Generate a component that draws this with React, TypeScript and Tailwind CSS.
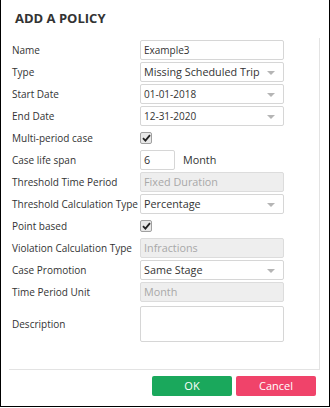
import React from "react";

const font = { fontFamily: '"Open Sans", "Noto Sans", sans-serif' };

function Arrow() {
  return (
    <svg width="8" height="5" viewBox="0 0 8 5" className="absolute right-[8px] top-[8px]">
      <path d="M0 0 L8 0 L4 4 Z" fill="#b5b5b5" />
    </svg>
  );
}

function Check() {
  return (
    <div className="w-[12px] h-[12px] border border-[#a0a0a0] rounded-[2px] bg-[#e8e8e8] flex items-center justify-center">
      <svg width="9" height="8" viewBox="0 0 9 8">
        <path d="M1 4.2 L3.4 6.6 L8 1.2" stroke="#222" strokeWidth="1.8" fill="none" />
      </svg>
    </div>
  );
}

function Row({ label, children }: { label: string; children: React.ReactNode }) {
  return (
    <div className="flex items-center h-[22px]">
      <div className="w-[128px] text-[10px] text-[#333] whitespace-nowrap">{label}</div>
      <div className="flex items-center">{children}</div>
    </div>
  );
}

function Input({ value, small }: { value: string; small?: boolean }) {
  return (
    <div className={`w-[144px] h-[20px] border border-[#d6d6d6] rounded-[2px] bg-white px-[3px] flex items-center text-[#333] whitespace-nowrap ${small ? "text-[10px]" : "text-[10.8px]"}`}>
      {value}
    </div>
  );
}

function Select({ value, small }: { value: string; small?: boolean }) {
  return (
    <div className={`relative w-[144px] h-[20px] border border-[#d6d6d6] rounded-[2px] bg-white px-[3px] flex items-center text-[#333] whitespace-nowrap ${small ? "text-[10px]" : "text-[10.8px]"}`}>
      {value}
      <Arrow />
    </div>
  );
}

function Disabled({ value }: { value: string }) {
  return (
    <div className="w-[144px] h-[20px] border border-[#dcdcdc] rounded-[2px] bg-[#eeeeee] px-[3px] flex items-center text-[10.8px] text-[#a8a8a8]">
      {value}
    </div>
  );
}

export default function App() {
  return (
    <div className="w-[330px] h-[407px] bg-white border-x border-b border-black flex flex-col" style={font}>
      <div className="h-[38px] pl-[14px] pt-[12px] text-[13px] font-bold text-[#333] leading-none">ADD A POLICY</div>
      <div className="ml-[8px] mr-[9px] h-[332px] border-r border-b border-[#e3e3e3] pl-[3px] pt-[1px]">
        <Row label="Name"><Input value="Example3" small /></Row>
        <Row label="Type"><Select value="Missing Scheduled Trip" /></Row>
        <Row label="Start Date"><Select value="01-01-2018" small /></Row>
        <Row label="End Date"><Select value="12-31-2020" small /></Row>
        <Row label="Multi-period case"><Check /></Row>
        <Row label="Case life span">
          <div className="w-[35px] h-[20px] border border-[#d6d6d6] rounded-[2px] px-[3px] flex items-center text-[10.8px] text-[#333]">6</div>
          <span className="ml-[8px] text-[10.8px] text-[#333]">Month</span>
        </Row>
        <Row label="Threshold Time Period"><Disabled value="Fixed Duration" /></Row>
        <Row label="Threshold Calculation Type"><Select value="Percentage" /></Row>
        <Row label="Point based"><Check /></Row>
        <Row label="Violation Calculation Type"><Disabled value="Infractions" /></Row>
        <Row label="Case Promotion"><Select value="Same Stage" /></Row>
        <Row label="Time Period Unit"><Disabled value="Month" /></Row>
        <div className="flex items-center h-[38px] mt-[2px]">
          <div className="w-[128px] text-[10px] text-[#333]">Description</div>
          <div className="w-[144px] h-[36px] border border-[#d6d6d6] rounded-[2px] bg-white" />
        </div>
      </div>
      <div className="flex justify-end gap-[4px] pr-[13px] pt-[6px]">
        <button className="w-[80px] h-[20px] rounded-[2px] bg-[#1aa85c] text-white text-[11px]">OK</button>
        <button className="w-[80px] h-[20px] rounded-[2px] bg-[#f0436a] text-white text-[11px]">Cancel</button>
      </div>
    </div>
  );
}
